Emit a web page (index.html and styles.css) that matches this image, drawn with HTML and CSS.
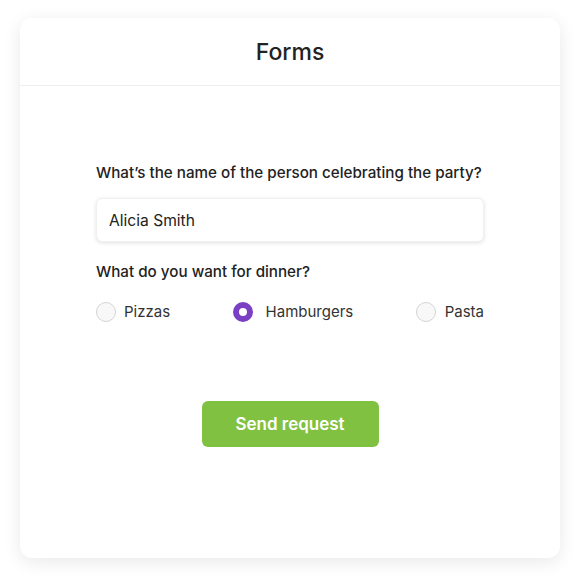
FILE: index.html
```html
<!DOCTYPE html>
<html>
<head>
<meta charset="utf-8">
<link rel="stylesheet" href="styles.css">
</head>
<body>
<div class="card">
  <div class="card-header">Forms</div>
  <form class="form">
    <label class="label" for="name">What’s the name of the person celebrating the party?</label>
    <input id="name" class="input" type="text" value="Alicia Smith">
    <div class="label label-2">What do you want for dinner?</div>
    <div class="radios">
      <label class="radio"><span class="dot"></span>Pizzas</label>
      <label class="radio"><span class="dot checked"></span>Hamburgers</label>
      <label class="radio"><span class="dot"></span>Pasta</label>
    </div>
    <div class="actions"><button type="button" class="btn">Send request</button></div>
  </form>
</div>
</body>
</html>
```
FILE: styles.css
```css
* { box-sizing: border-box; }
html, body { margin: 0; padding: 0; background: #fff; }
body {
  font-family: Inter, "Noto Sans", sans-serif;
  color: #222;
  padding: 18px 20px 22px;
}
.card {
  width: 540px;
  height: 540px;
  background: #fff;
  border-radius: 12px;
  box-shadow: 0 4px 18px rgba(0,0,0,0.09);
}
.card-header {
  height: 68px;
  border-bottom: 1px solid #eeeeee;
  display: flex;
  align-items: center;
  justify-content: center;
  font-size: 23px;
  font-weight: 500;
  color: #222;
  padding-top: 1px;
}
.form {
  width: 388px;
  margin: 0 auto;
  padding-top: 77px;
  display: flex;
  flex-direction: column;
}
.label {
  font-size: 15.2px;
  font-weight: 500;
  color: #222;
  line-height: 20px;
  white-space: nowrap;
}
.input {
  margin-top: 15px;
  height: 44px;
  border: 1px solid #f0f0f0;
  border-radius: 6px;
  box-shadow: 0 1px 4px rgba(0,0,0,0.12);
  padding: 0 12px;
  font-family: inherit;
  font-size: 15.6px;
  color: #222;
  outline: none;
}
.label-2 { margin-top: 20px; }
.radios {
  margin-top: 20px;
  display: flex;
  justify-content: space-between;
  align-items: center;
}
.radio {
  display: flex;
  align-items: center;
  font-size: 15px;
  color: #333;
  line-height: 20px;
}
.dot {
  width: 20px;
  height: 20px;
  border-radius: 50%;
  border: 1px solid #d4d4d4;
  background: #f8f8f8;
  margin-right: 8px;
}
.radio:nth-child(2) .dot { margin-right: 13px; }
.radio:nth-child(3) .dot { margin-right: 9px; }
.dot.checked {
  border: 6px solid #7b3fc4;
  background: #fff;
}
.actions {
  display: flex;
  justify-content: center;
  margin-top: 79px;
}
.btn {
  width: 177px;
  height: 46px;
  border: none;
  border-radius: 6px;
  background: #80c141;
  color: #fff;
  font-family: inherit;
  font-size: 17px;
  font-weight: 600;
}
```
